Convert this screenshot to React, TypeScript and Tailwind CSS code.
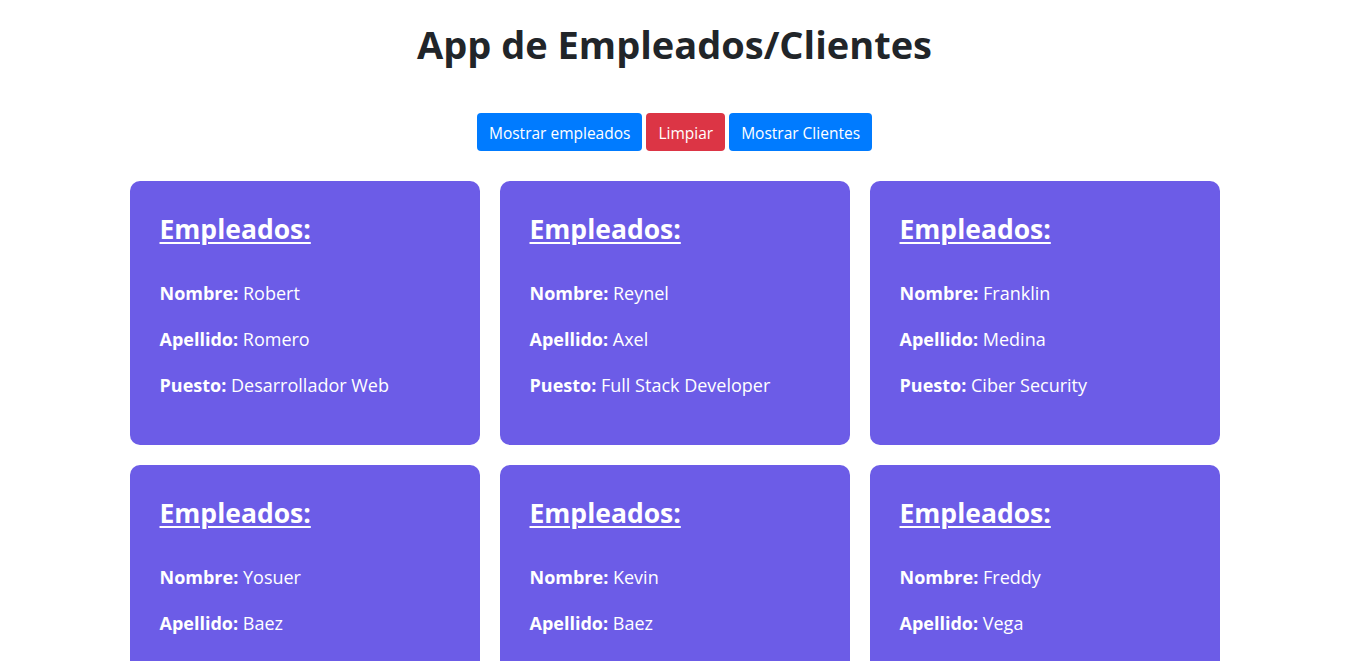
import React from 'react';

type Empleado = { nombre: string; apellido: string; puesto: string };

const empleados: Empleado[] = [
  { nombre: 'Robert', apellido: 'Romero', puesto: 'Desarrollador Web' },
  { nombre: 'Reynel', apellido: 'Axel', puesto: 'Full Stack Developer' },
  { nombre: 'Franklin', apellido: 'Medina', puesto: 'Ciber Security' },
  { nombre: 'Yosuer', apellido: 'Baez', puesto: 'Desarrollador Web' },
  { nombre: 'Kevin', apellido: 'Baez', puesto: 'Frontend Developer' },
  { nombre: 'Freddy', apellido: 'Vega', puesto: 'Backend Developer' },
];

const EmpleadoCard = ({ emp }: { emp: Empleado }) => (
  <div className="bg-[#6c5ce7] rounded-[10px] px-[30px] pt-[31px] pb-[29px] text-white">
    <h3 className="text-[26.5px] leading-[34px] font-bold underline decoration-2 underline-offset-[3px] mb-[32px]">
      Empleados:
    </h3>
    <p className="text-[18px] leading-[30px] mb-4">
      <strong>Nombre:</strong> {emp.nombre}
    </p>
    <p className="text-[18px] leading-[30px] mb-4">
      <strong>Apellido:</strong> {emp.apellido}
    </p>
    <p className="text-[18px] leading-[30px] mb-4">
      <strong>Puesto:</strong> {emp.puesto}
    </p>
  </div>
);

export default function App() {
  return (
    <div className="min-h-screen bg-white font-['Open_Sans','Noto_Sans',sans-serif] text-[#212529]">
      <h1 className="text-center text-[38px] leading-[48px] font-bold pt-5">App de Empleados/Clientes</h1>

      <div className="flex justify-center gap-1 mt-[45px]">
        <button className="bg-[#007bff] text-white text-[15.5px] leading-6 px-3 pt-[8px] pb-[6px] rounded">
          Mostrar empleados
        </button>
        <button className="bg-[#dc3545] text-white text-[15.5px] leading-6 px-3 pt-[8px] pb-[6px] rounded">
          Limpiar
        </button>
        <button className="bg-[#007bff] text-white text-[15.5px] leading-6 px-3 pt-[8px] pb-[6px] rounded">
          Mostrar Clientes
        </button>
      </div>

      <div className="grid grid-cols-[repeat(3,350px)] justify-center gap-5 mt-[30px] pb-5">
        {empleados.map((emp, i) => (
          <EmpleadoCard key={i} emp={emp} />
        ))}
      </div>
    </div>
  );
}
